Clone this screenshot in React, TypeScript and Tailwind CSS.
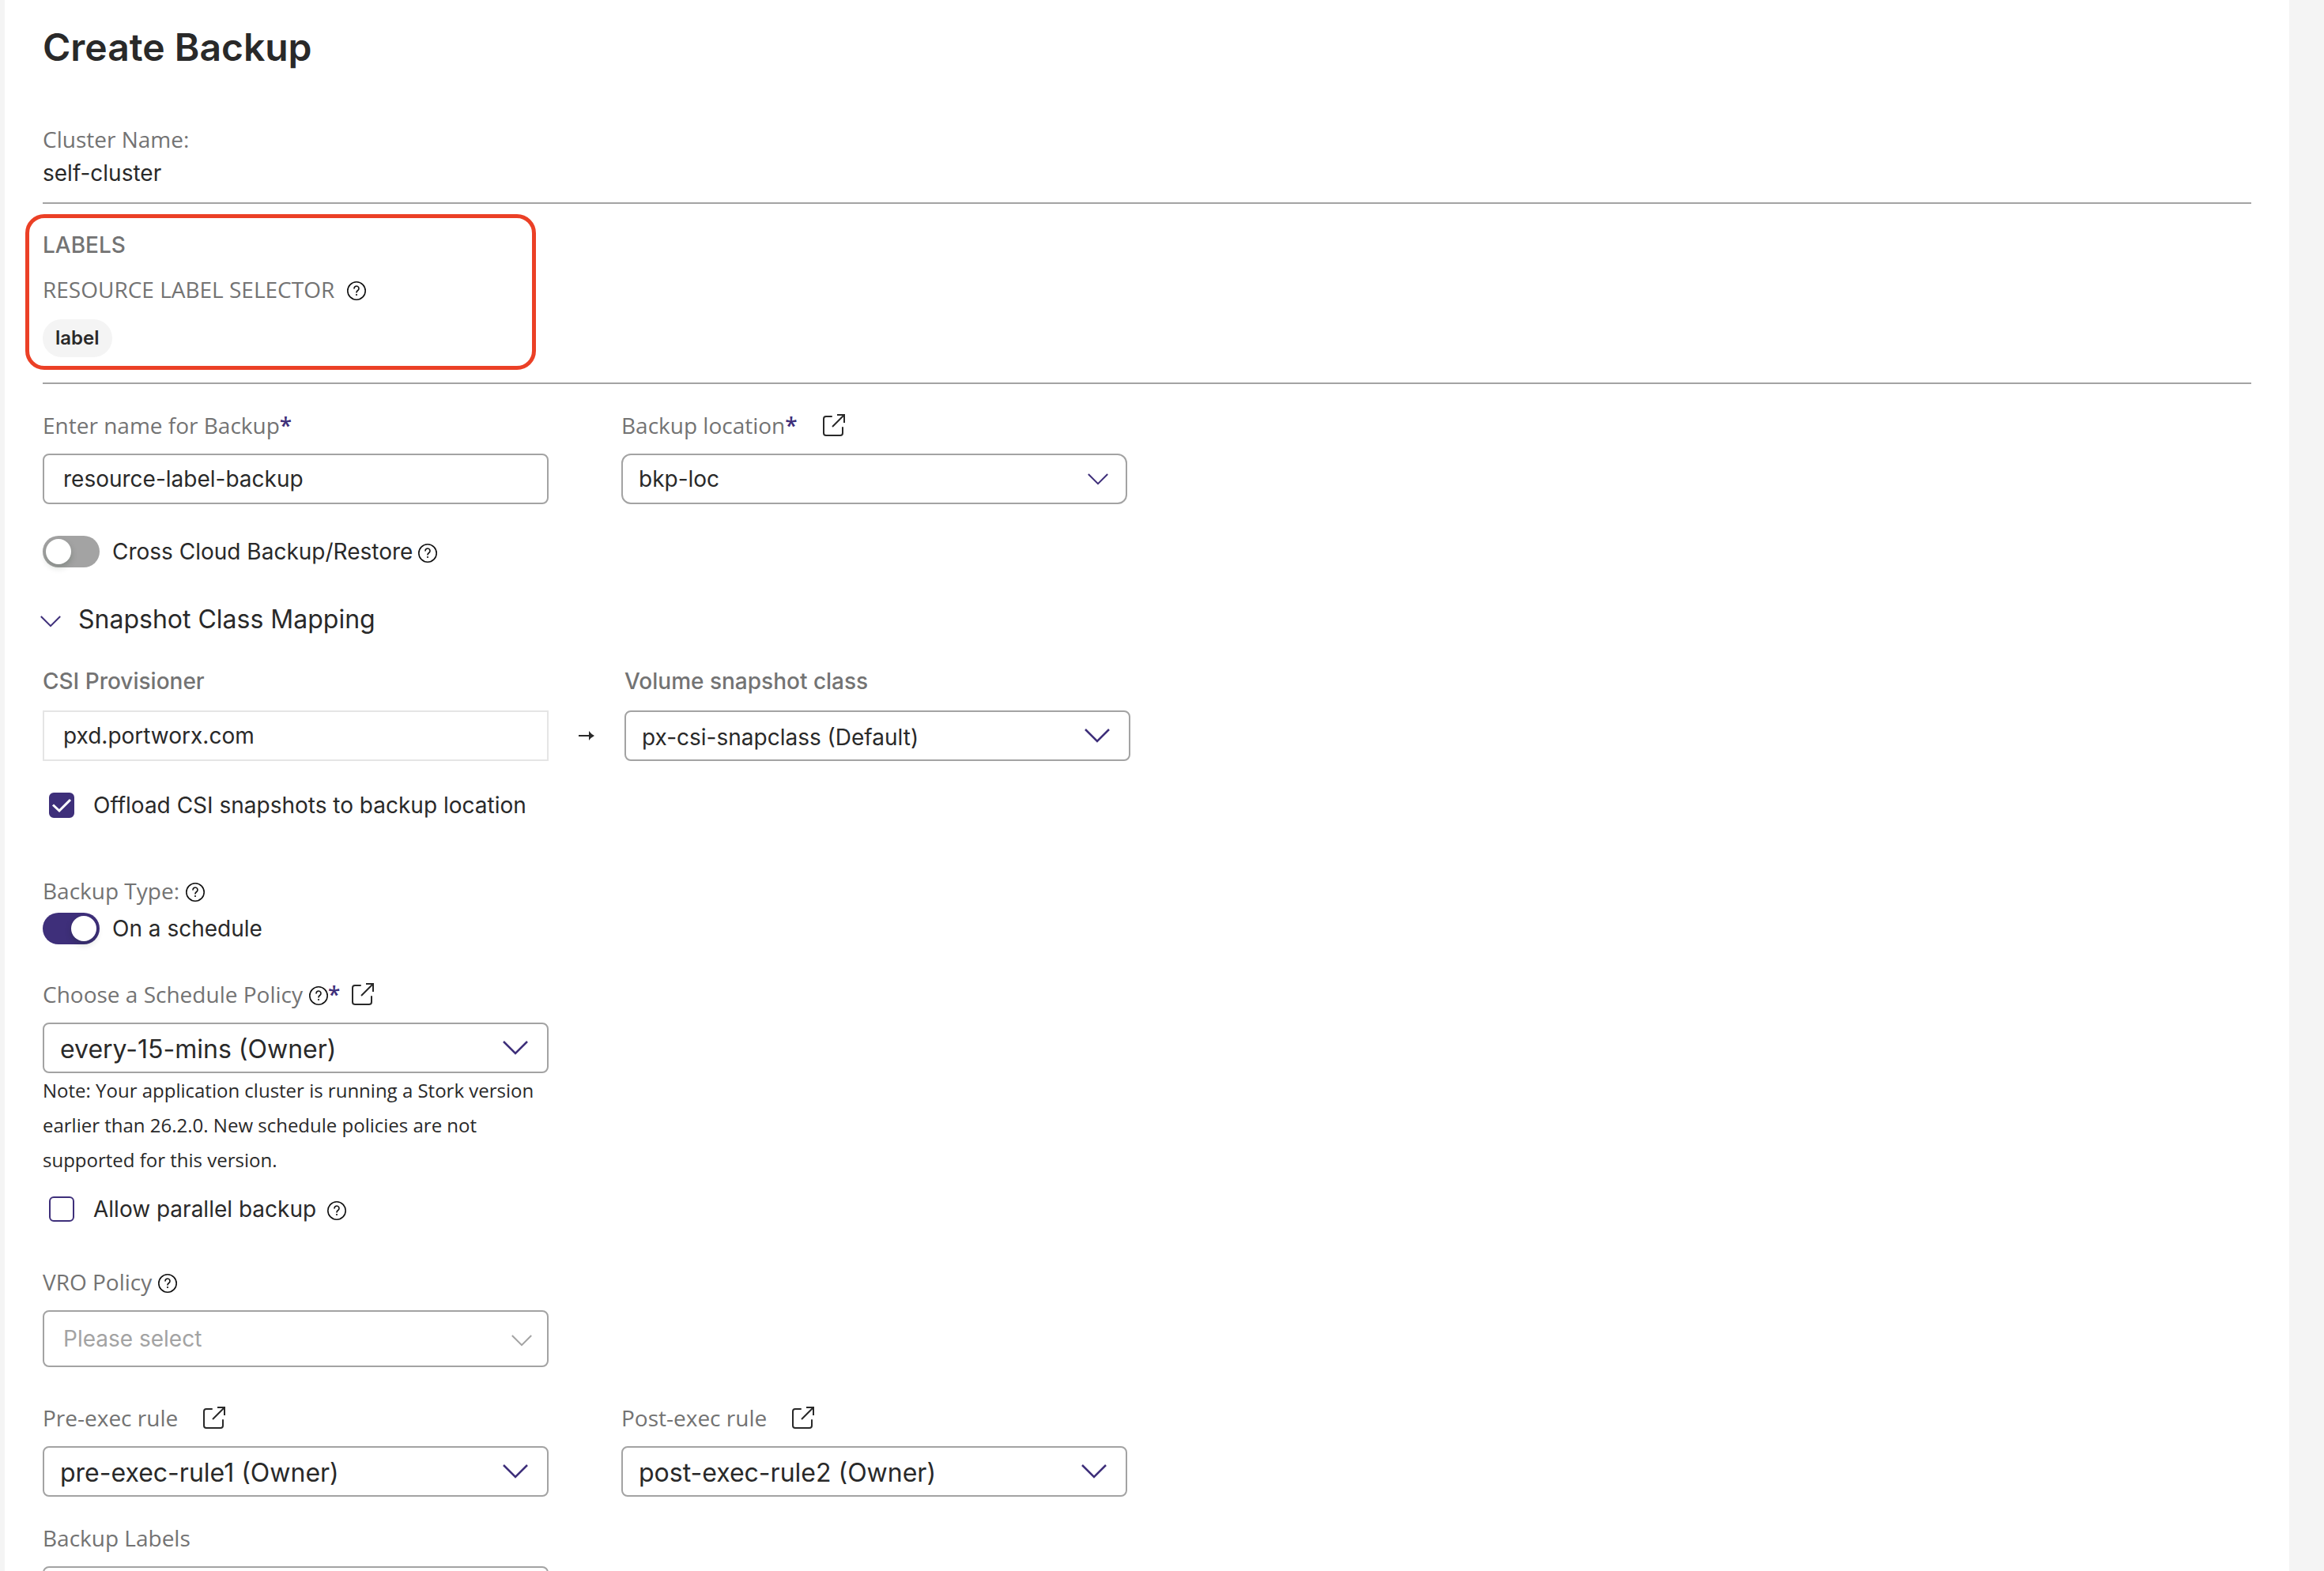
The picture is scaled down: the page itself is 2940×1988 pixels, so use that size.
import { useId, useState } from "react";
import type { ReactNode } from "react";
import clsx from "clsx";

function HelpIcon() {
  return (
    <svg viewBox="0 0 24 24" className="mt-1 size-6 shrink-0" fill="none" stroke="#111" aria-hidden="true">
      <circle cx="12" cy="12" r="11.200" strokeWidth="1.600" />
      <path d="M9 9a3 3 0 1 1 4.700 2.500c-1 .7-1.700 1.200-1.700 2.400" strokeWidth="1.600" strokeLinecap="round" />
      <circle cx="12" cy="17" r="1.100" fill="#111" stroke="none" />
    </svg>
  );
}

function ExternalIcon() {
  return (
    <svg viewBox="0 0 30 30" className="size-[30px]" fill="none" stroke="#292929" strokeWidth="2" aria-hidden="true">
      <path d="M12 4H5a3 3 0 0 0-3 3v18a3 3 0 0 0 3 3h18a3 3 0 0 0 3-3v-7" strokeLinecap="round" />
      <path d="M19 2h9v10M28 2 13 17" />
    </svg>
  );
}

function Chevron({ className }: { className: string }) {
  return (
    <svg viewBox="0 0 32 18" className={className} fill="none" stroke="currentColor" strokeWidth="2.500" aria-hidden="true">
      <path d="m1 1 15 15L31 1" />
    </svg>
  );
}

function ExternalLink({ label }: { label: string }) {
  return (
    <a href="#" aria-label={label} className="shrink-0">
      <ExternalIcon />
    </a>
  );
}

const LABEL = "font-['Open_Sans',sans-serif] text-[28px] leading-10 text-[#737373]";

function Field({
  label,
  htmlFor,
  required,
  help,
  link,
  linkGap = "ml-[31px]",
  children,
}: {
  label: string;
  htmlFor: string;
  required?: boolean;
  help?: boolean;
  link?: string;
  linkGap?: string;
  children: ReactNode;
}) {
  return (
    <div className="flex w-[640px] flex-col gap-4">
      <div className={clsx("flex items-center", LABEL)}>
        <label htmlFor={htmlFor} className="flex items-center gap-2">
          {label}
          {help && <HelpIcon />}
        </label>
        {required && <span className="font-semibold text-[#3e2f7a]">*</span>}
        {link && (
          <span className={linkGap}>
            <ExternalLink label={link} />
          </span>
        )}
      </div>
      {children}
    </div>
  );
}

function Select({
  id,
  options,
  size = "lg",
  muted,
}: {
  id: string;
  options: string[];
  size?: "sm" | "md" | "lg";
  muted?: boolean;
}) {
  return (
    <div className="relative">
      <select
        id={id}
        className={clsx(
          "block w-full appearance-none border-2 border-[#a3a3a3] bg-white",
          muted ? "h-[72px] pl-6 text-[#a3a3a3]" : "h-16 pl-5",
          size === "sm" ? "rounded-xl" : "rounded-lg",
          size === "lg" ? "text-[32px]" : "text-[28px]",
          size !== "sm" && !muted && "pt-1",
        )}
      >
        {options.map((o) => (
          <option key={o}>{o}</option>
        ))}
      </select>
      <span
        className={clsx(
          "pointer-events-none absolute inset-y-0 flex items-center",
          muted ? "right-[21px] pt-1 text-[#a3a3a3]" : "text-[#3e2f7a]",
          !muted && (size === "sm" ? "right-6" : "right-[26px]"),
        )}
      >
        <Chevron className={muted || size === "sm" ? "h-[15px] w-[26px]" : "h-[18px] w-8"} />
      </span>
    </div>
  );
}

function Toggle({ label, initial, help }: { label: string; initial: boolean; help?: boolean }) {
  const [on, setOn] = useState(initial);
  const id = useId();
  return (
    <div className="flex items-center">
      <button
        id={id}
        type="button"
        role="switch"
        aria-checked={on}
        aria-label={label}
        onClick={() => setOn(!on)}
        className={clsx("flex h-10 w-[72px] items-center rounded-full p-1", on ? "justify-end bg-[#3e2f7a]" : "bg-[#a3a3a3]")}
      >
        <span className="size-8 rounded-full bg-white shadow-[0_4px_8px_rgba(0,35,11,0.2)]" />
      </button>
      <label htmlFor={id} className="ml-4 text-[28px] leading-10">
        {label}
      </label>
      {help && (
        <span className="ml-[7px]">
          <HelpIcon />
        </span>
      )}
    </div>
  );
}

function Checkbox({ label, initial, help }: { label: string; initial: boolean; help?: boolean }) {
  const [checked, setChecked] = useState(initial);
  return (
    <div className="flex items-center gap-3.5 pl-2">
      <label className="flex items-center gap-6 text-[28px] leading-10">
        <span className="relative size-8">
          <input
            type="checkbox"
            checked={checked}
            onChange={(e) => setChecked(e.target.checked)}
            className="block size-8 appearance-none rounded-md border-2 border-[#3e2f7a] bg-white checked:bg-[#3e2f7a]"
          />
          {checked && (
            <svg viewBox="0 0 32 32" className="pointer-events-none absolute inset-0" fill="none" stroke="#fff" strokeWidth="3" aria-hidden="true">
              <path d="m5 15.500 8 7.500L27 9" />
            </svg>
          )}
        </span>
        {label}
      </label>
      {help && <HelpIcon />}
    </div>
  );
}

export default function App() {
  const [name, setName] = useState("resource-label-backup");

  return (
    <div className="h-screen overflow-hidden bg-[#f4f4f4] pr-11 pl-1.5 font-[Inter,sans-serif] text-[#292929]">
      <main className="min-h-full bg-white px-12 pt-7">
        <h1 className="text-5xl leading-16 font-semibold">Create Backup</h1>

        <section className="mt-16 border-b-2 border-[#a3a3a3] pb-3.5">
          <p className={LABEL}>Cluster Name:</p>
          <p className="text-[28px] leading-[46px]">self-cluster</p>
        </section>

        <section className="border-b-2 border-[#a3a3a3] pt-[13px] pb-4">
          <div className="-ml-[22px] w-[646px] rounded-3xl border-5 border-[#eb4026] px-[17px] pt-3.5 pb-[11px]">
            <h2 className="text-[28px] leading-10 font-medium text-[#737373]">LABELS</h2>
            <p className={clsx("mt-4 flex items-center gap-4", LABEL)}>
              RESOURCE LABEL SELECTOR
              <HelpIcon />
            </p>
            <span className="mt-[18px] flex h-12 w-fit items-center rounded-full bg-[#f4f4f4] px-4 text-2xl font-semibold">label</span>
          </div>
        </section>

        <form>
          <div className="mt-8 flex gap-[92px]">
            <Field label="Enter name for Backup" htmlFor="name" required>
              <input
                id="name"
                value={name}
                onChange={(e) => setName(e.target.value)}
                className="h-16 rounded-lg border-2 border-[#a3a3a3] px-6 text-[28px]"
              />
            </Field>
            <Field label="Backup location" htmlFor="location" required link="Open backup locations">
              <Select id="location" size="sm" options={["bkp-loc"]} />
            </Field>
          </div>

          <div className="mt-10">
            <Toggle label="Cross Cloud Backup/Restore" initial={false} help />
          </div>

          <button type="button" aria-expanded="true" className="mt-11 -ml-[3px] flex items-center gap-[22px] text-[32px] leading-11">
            <Chevron className="mt-1 h-[15px] w-[26px] text-[#3e2f7a]" />
            Snapshot Class Mapping
          </button>

          <div className="mt-9 flex items-end">
            <div className="flex w-[640px] flex-col gap-[17px]">
              <label htmlFor="csi" className="text-[28px] leading-10 font-medium text-[#737373]">
                CSI Provisioner
              </label>
              <input id="csi" readOnly value="pxd.portworx.com" className="h-16 border-2 border-[#e5e5e5] px-6 text-[28px]" />
            </div>
            <div className="flex h-16 w-24 items-center justify-center">
              <svg viewBox="0 0 20 12" className="h-3 w-5" aria-hidden="true">
                <path d="M0 5h13V0q3 4 7 6-4 2-7 6V7H0z" fill="#292929" />
              </svg>
            </div>
            <div className="flex w-[640px] flex-col gap-[17px]">
              <label htmlFor="vsc" className="text-[28px] leading-10 font-medium text-[#737373]">
                Volume snapshot class
              </label>
              <Select id="vsc" size="md" options={["px-csi-snapclass (Default)"]} />
            </div>
          </div>

          <div className="mt-9">
            <Checkbox label="Offload CSI snapshots to backup location" initial={true} />
          </div>

          <div className="mt-17">
            <div className={clsx("flex items-center gap-2", LABEL)}>
              Backup Type:
              <HelpIcon />
            </div>
            <div className="mt-2">
              <Toggle label="On a schedule" initial={true} />
            </div>
          </div>

          <div className="mt-[43px]">
            <Field label="Choose a Schedule Policy" htmlFor="policy" required help link="Open schedule policies" linkGap="ml-3.5">
              <Select id="policy" options={["every-15-mins (Owner)"]} />
            </Field>
            <p className="w-[640px] font-['Open_Sans',sans-serif] text-2xl leading-11">
              Note: Your application cluster is running a Stork version earlier than 26.2.0. New schedule policies are not supported for this version.
            </p>
          </div>

          <div className="mt-5">
            <Checkbox label="Allow parallel backup" initial={false} help />
          </div>

          <div className="mt-13">
            <Field label="VRO Policy" htmlFor="vro" help>
              <Select id="vro" size="md" muted options={["Please select"]} />
            </Field>
          </div>

          <div className="mt-11 flex gap-[92px]">
            <Field label="Pre-exec rule" htmlFor="pre" link="Open pre-exec rules">
              <Select id="pre" options={["pre-exec-rule1 (Owner)"]} />
            </Field>
            <Field label="Post-exec rule" htmlFor="post" link="Open post-exec rules">
              <Select id="post" options={["post-exec-rule2 (Owner)"]} />
            </Field>
          </div>

          <div className="mt-8">
            <Field label="Backup Labels" htmlFor="labels">
              <input id="labels" className="h-16 rounded-lg border-2 border-[#a3a3a3] px-6 text-[28px]" />
            </Field>
          </div>
        </form>
      </main>
    </div>
  );
}
